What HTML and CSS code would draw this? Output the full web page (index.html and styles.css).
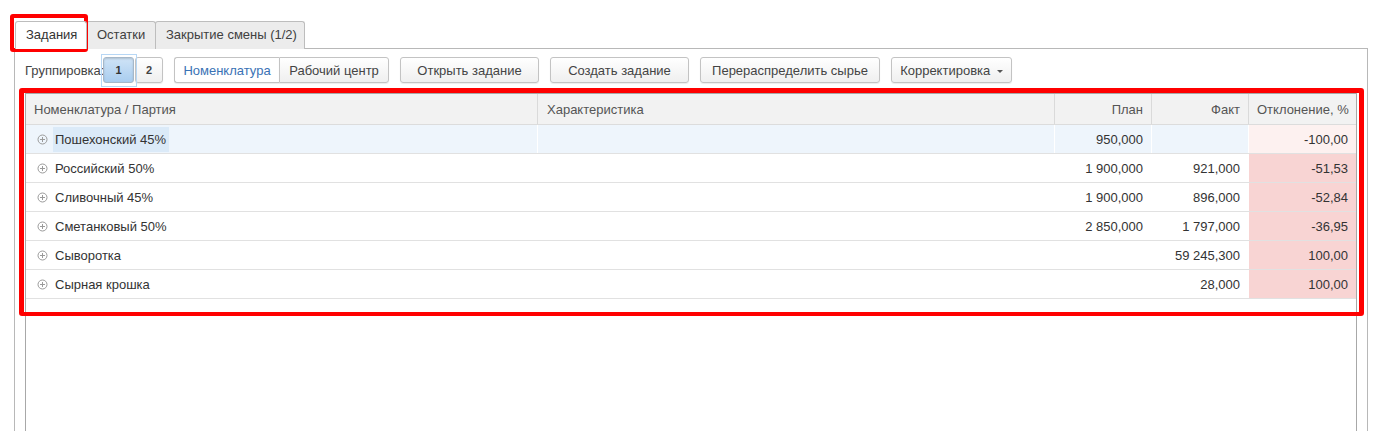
FILE: index.html
```html
<!DOCTYPE html>
<html lang="ru">
<head>
<meta charset="utf-8">
<link rel="stylesheet" href="styles.css">
</head>
<body>
<div class="page">
  <div class="tabs">
    <div class="tab active">Задания</div>
    <div class="tab">Остатки</div>
    <div class="tab">Закрытие смены (1/2)</div>
  </div>
  <div class="panel">
    <div class="toolbar">
      <span class="label">Группировка:</span>
      <div class="group-wrap">
        <span class="focus-ring"></span>
        <button class="btn num pressed">1</button>
        <button class="btn num">2</button>
      </div>
      <div class="segmented">
        <button class="btn seg on">Номенклатура</button>
        <button class="btn seg">Рабочий центр</button>
      </div>
      <button class="btn w139">Открыть задание</button>
      <button class="btn w139">Создать задание</button>
      <button class="btn w180">Перераспределить сырье</button>
      <button class="btn w120">Корректировка <span class="caret"></span></button>
    </div>
    <div class="grid">
      <div class="row head">
        <div class="c c1">Номенклатура / Партия</div>
        <div class="c c2">Характеристика</div>
        <div class="c c3 r">План</div>
        <div class="c c4 r">Факт</div>
        <div class="c c5 r">Отклонение, %</div>
      </div>
      <div class="row sel">
        <div class="c c1"><svg class="plus" width="11" height="11" viewBox="0 0 11 11"><circle cx="5.5" cy="5.5" r="4.5" fill="none" stroke="#9a9a9a"/><path d="M3 5.5h5M5.5 3v5" stroke="#9a9a9a"/></svg><span class="name hl">Пошехонский 45%</span></div>
        <div class="c c2"></div>
        <div class="c c3 r">950,000</div>
        <div class="c c4 r"></div>
        <div class="c c5 r light">-100,00</div>
      </div>
      <div class="row">
        <div class="c c1"><svg class="plus" width="11" height="11" viewBox="0 0 11 11"><circle cx="5.5" cy="5.5" r="4.5" fill="none" stroke="#9a9a9a"/><path d="M3 5.5h5M5.5 3v5" stroke="#9a9a9a"/></svg><span class="name">Российский 50%</span></div>
        <div class="c c2"></div>
        <div class="c c3 r">1 900,000</div>
        <div class="c c4 r">921,000</div>
        <div class="c c5 r pink">-51,53</div>
      </div>
      <div class="row">
        <div class="c c1"><svg class="plus" width="11" height="11" viewBox="0 0 11 11"><circle cx="5.5" cy="5.5" r="4.5" fill="none" stroke="#9a9a9a"/><path d="M3 5.5h5M5.5 3v5" stroke="#9a9a9a"/></svg><span class="name">Сливочный 45%</span></div>
        <div class="c c2"></div>
        <div class="c c3 r">1 900,000</div>
        <div class="c c4 r">896,000</div>
        <div class="c c5 r pink">-52,84</div>
      </div>
      <div class="row">
        <div class="c c1"><svg class="plus" width="11" height="11" viewBox="0 0 11 11"><circle cx="5.5" cy="5.5" r="4.5" fill="none" stroke="#9a9a9a"/><path d="M3 5.5h5M5.5 3v5" stroke="#9a9a9a"/></svg><span class="name">Сметанковый 50%</span></div>
        <div class="c c2"></div>
        <div class="c c3 r">2 850,000</div>
        <div class="c c4 r">1 797,000</div>
        <div class="c c5 r pink">-36,95</div>
      </div>
      <div class="row">
        <div class="c c1"><svg class="plus" width="11" height="11" viewBox="0 0 11 11"><circle cx="5.5" cy="5.5" r="4.5" fill="none" stroke="#9a9a9a"/><path d="M3 5.5h5M5.5 3v5" stroke="#9a9a9a"/></svg><span class="name">Сыворотка</span></div>
        <div class="c c2"></div>
        <div class="c c3 r"></div>
        <div class="c c4 r">59 245,300</div>
        <div class="c c5 r pink">100,00</div>
      </div>
      <div class="row">
        <div class="c c1"><svg class="plus" width="11" height="11" viewBox="0 0 11 11"><circle cx="5.5" cy="5.5" r="4.5" fill="none" stroke="#9a9a9a"/><path d="M3 5.5h5M5.5 3v5" stroke="#9a9a9a"/></svg><span class="name">Сырная крошка</span></div>
        <div class="c c2"></div>
        <div class="c c3 r"></div>
        <div class="c c4 r">28,000</div>
        <div class="c c5 r pink">100,00</div>
      </div>
    </div>
  </div>
  <div class="mark mark-tab"></div>
  <div class="mark mark-grid"></div>
</div>
</body>
</html>
```

FILE: styles.css
```css
* { box-sizing: border-box; }
html, body { margin: 0; height: 100%; overflow: hidden; background: #fff; }
body { font-family: "Liberation Sans", Arial, sans-serif; font-size: 13px; color: #333; }

.page { position: relative; padding: 21px 13px 0 14px; height: 431px; }

.tabs { display: flex; padding-left: 1px; height: 27px; }
.tab {
  height: 28px; padding: 0 9px 0 10px; line-height: 25px; white-space: nowrap;
  border: 1px solid #bdbdbd; border-bottom: none; border-radius: 3px 3px 0 0;
  background: #ececec; color: #404040; margin-right: -1px; position: relative;
}
.tab:nth-child(1) { width: 72px; }
.tab:nth-child(2) { width: 70px; }
.tab:nth-child(3) { width: 150px; }
.tab.active { background: #fff; z-index: 2; color: #333; }

.panel {
  border: 1px solid #b8b8b8; border-bottom: none;
  padding: 0 10px; height: 400px;
}

.toolbar { display: flex; align-items: center; height: 26px; margin-top: 8px; }
.label { color: #444; margin-right: 0; width: 78px; white-space: nowrap; }
.group-wrap { position: relative; display: flex; margin-right: 11px; }
.focus-ring {
  position: absolute; left: -2px; top: -3px; width: 36px; height: 33px;
  border: 1px solid #b7d7f5; pointer-events: none;
}
.btn {
  font-family: inherit; font-size: 13px; color: #444; white-space: nowrap;
  height: 26px; padding: 0 4px; margin: 0;
  border: 1px solid #c3c3c3; border-radius: 3px;
  background: linear-gradient(#ffffff, #efefef);
  box-shadow: 0 1px 1px rgba(0,0,0,0.08);
  margin-right: 11px;
}
.btn.num { width: 31px; padding: 0; font-weight: bold; font-size: 11px; margin-right: 0; }
.btn.num + .btn.num { width: 28px; margin-left: 1px; }
.btn.pressed {
  background: linear-gradient(#cfe3f6, #a9cdef);
  border-color: #a6b8c9; color: #333;
  box-shadow: inset 0 1px 2px rgba(0,0,0,0.15);
}
.segmented { display: flex; margin-right: 11px; }
.btn.seg { margin-right: 0; }
.btn.seg.on { width: 105px; background: #fff; color: #3a72b5; border-radius: 3px 0 0 3px; border-right: none; }
.btn.seg:not(.on) { width: 110px; border-radius: 0 3px 3px 0; }
.w139 { width: 139px; }
.w180 { width: 180px; }
.w120 { width: 121px; }
.caret {
  display: inline-block; width: 0; height: 0; vertical-align: middle; margin-left: 3px;
  border-left: 3px solid transparent; border-right: 3px solid transparent; border-top: 3px solid #555;
}

.grid { margin-top: 10px; border: 1px solid #a8a8a8; height: 360px; }
.row { display: grid; grid-template-columns: 512px 517px 97px 97px 1fr; height: 29px; border-bottom: 1px solid #e1e1e1; }
.row.head { height: 31px; background: #f2f2f2; border-bottom: 1px solid #dcdcdc; color: #555; }
.c { display: flex; align-items: center; padding: 0 8px; white-space: nowrap; border-right: 1px solid #fff; }
.row.head .c { border-right: 1px solid #dadada; }
.row.head .c1 { padding-left: 8px; }
.row.head .c2 { padding-left: 9px; }
.c:last-child, .row.head .c:last-child { border-right: none; }
.r { justify-content: flex-end; }
.c1 { padding-left: 11px; }
.plus { flex: none; margin-right: 5px; }
.name { padding: 4px 2px; }
.name.hl { background: #dbeaf8; padding: 5px 3px 5px 2px; }
.row.sel .c1, .row.sel .c2, .row.sel .c3, .row.sel .c4 { background: #eef5fc; }
.light { background: #fdf1f0; }
.pink { background: #f8d4d3; }

.mark { position: absolute; border: 4px solid #f00; border-radius: 3px; pointer-events: none; }
.mark-tab { left: 10px; top: 14px; width: 78px; height: 38px; }
.mark-grid { left: 19px; top: 88px; width: 1345px; height: 228px; border-width: 5px 5px 4px 5px; }
```
